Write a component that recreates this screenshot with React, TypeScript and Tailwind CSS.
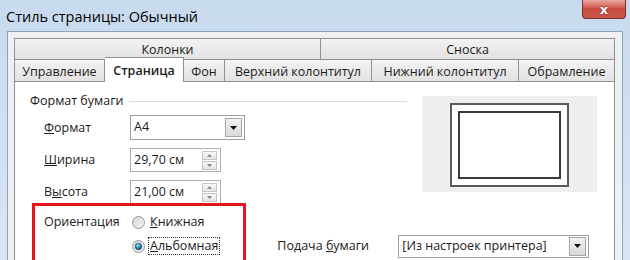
import React from "react";

const tabsTop = [
  { label: "Колонки", w: "w-[307px]" },
  { label: "Сноска", w: "w-[294px]" },
];

const tabsBottom = [
  { label: "Управление", w: "w-[91px]" },
  { label: "Страница", w: "w-[79px]", active: true },
  { label: "Фон", w: "w-[41px]" },
  { label: "Верхний колонтитул", w: "w-[147px]" },
  { label: "Нижний колонтитул", w: "w-[147px]" },
  { label: "Обрамление", w: "w-[96px]" },
];

function DropButton() {
  return (
    <div className="w-[17px] h-[19px] mr-[2px] border border-[#a7a7a7] bg-gradient-to-b from-[#f2f2f2] to-[#d9d9d9] flex items-center justify-center">
      <svg width="7" height="4" viewBox="0 0 7 4">
        <path d="M0 0h7L3.5 4z" fill="#111" />
      </svg>
    </div>
  );
}

function Spinner() {
  return (
    <div className="flex flex-col gap-[1px] mr-[3px]">
      {[0, 1].map((i) => (
        <div
          key={i}
          className="w-[15px] h-[9px] border border-[#c4c4c4] bg-gradient-to-b from-[#f8f8f8] to-[#e4e4e4] flex items-center justify-center"
        >
          <svg width="5" height="3" viewBox="0 0 5 3">
            <path d={i === 0 ? "M0 3h5L2.5 0z" : "M0 0h5L2.5 3z"} fill="#8a8a8a" />
          </svg>
        </div>
      ))}
    </div>
  );
}

function Radio({ checked }: { checked?: boolean }) {
  return (
    <svg width="13" height="13" viewBox="0 0 13 13">
      <defs>
        <linearGradient id={checked ? "rb1" : "rb0"} x1="0" y1="0" x2="1" y2="1">
          <stop offset="0" stopColor="#d4d4d4" />
          <stop offset="1" stopColor="#f6f6f6" />
        </linearGradient>
        <radialGradient id="dot" cx="0.4" cy="0.35" r="0.7">
          <stop offset="0" stopColor="#a8e0f5" />
          <stop offset="0.5" stopColor="#2a8bbf" />
          <stop offset="1" stopColor="#0d3d5c" />
        </radialGradient>
      </defs>
      <circle cx="6.5" cy="6.5" r="6" fill={checked ? "url(#rb1)" : "url(#rb0)"} stroke="#9a9a9a" />
      {checked && <circle cx="6.5" cy="6.5" r="3.3" fill="url(#dot)" stroke="#1b4a6a" strokeWidth="0.6" />}
    </svg>
  );
}

export default function App() {
  return (
    <div className="w-[630px] h-[260px] overflow-hidden bg-gradient-to-b from-[#c8daee] to-[#d8e5f4] text-[#1b1b1b] font-['Open_Sans','Noto_Sans',sans-serif] text-[12.5px] leading-none">
      <div className="h-[31px] flex justify-between items-start">
        <div className="pl-[6px] pt-[10px] text-[14.5px] text-black">Стиль страницы: Обычный</div>
        <div className="mr-[4px] w-[44px] h-[19px] rounded-b-[4px] border border-t-0 border-[#7d2d2a] bg-gradient-to-b from-[#e8a79f] via-[#cc4b3f] to-[#c8574c] flex items-center justify-center">
          <span className="text-white font-bold text-[13px] font-['DejaVu_Sans',sans-serif] [text-shadow:0_0_2px_#5a1a16]">x</span>
        </div>
      </div>

      <div className="ml-[7px] w-[616px] h-[240px] border border-[#8fa3bb] bg-[#f0f0f0] pl-[6px] pr-[7px] pt-[6px]">
        <div className="flex h-[21px]">
          {tabsTop.map((t, i) => (
            <div
              key={t.label}
              className={`${t.w} border-t border-r border-[#8d9199] ${i === 0 ? "border-l" : ""} bg-gradient-to-b from-[#f3f3f3] to-[#e2e2e2] flex items-center justify-center pt-[3px]`}
            >
              {t.label}
            </div>
          ))}
        </div>
        <div className="flex items-end h-[22px]">
          {tabsBottom.map((t, i) =>
            t.active ? (
              <div
                key={t.label}
                className={`${t.w} h-[25px] -mb-[1px] relative z-10 bg-white border-t border-r border-[#8d9199] flex items-center justify-center font-semibold pt-[3px]`}
              >
                {t.label}
              </div>
            ) : (
              <div
                key={t.label}
                className={`${t.w} h-[22px] border-t border-r border-[#8d9199] ${i === 0 ? "border-l" : ""} bg-gradient-to-b from-[#f3f3f3] to-[#e2e2e2] flex items-center justify-center pt-[4px]`}
              >
                {t.label}
              </div>
            )
          )}
        </div>

        <div className="relative h-[200px] border border-[#8d9199] bg-white">
          <div className="flex items-start">
            <div className="pl-[15px] pt-[11px]">
              <div className="w-[377px] h-[16px] flex items-center pt-[1px]">
                <span>Формат бумаги</span>
                <div className="flex-1 h-px bg-[#d5dde4] ml-[5px]" />
              </div>

              <div className="mt-[6px] flex items-center h-[25px] pl-[14px]">
                <div className="w-[86px] pt-[1px]">
                  <u>Ф</u>ормат
                </div>
                <div className="w-[115px] h-[25px] border border-[#9f9f9f] bg-white flex items-center justify-between">
                  <span className="pl-[3px]">A4</span>
                  <DropButton />
                </div>
              </div>

              <div className="mt-[8px] flex items-center h-[24px] pl-[14px]">
                <div className="w-[86px]">
                  <u>Ш</u>ирина
                </div>
                <div className="w-[91px] h-[24px] border border-[#abadb3] bg-white flex items-center justify-between">
                  <span className="pl-[3px]">29,70 см</span>
                  <Spinner />
                </div>
              </div>

              <div className="mt-[8px] flex items-center h-[24px] pl-[14px]">
                <div className="w-[86px]">
                  В<u>ы</u>сота
                </div>
                <div className="w-[91px] h-[24px] border border-[#abadb3] bg-white flex items-center justify-between">
                  <span className="pl-[3px]">21,00 см</span>
                  <Spinner />
                </div>
              </div>
            </div>

            <div className="ml-[15px] mt-[14px] w-[175px] h-[96px] bg-[#efefef] pl-[28px] pt-[7px]">
              <div className="w-[119px] h-[84px] border-2 border-[#5b5b5b] bg-white p-[6px] flex">
                <div className="flex-1 border-2 border-[#3a3a3a]" />
              </div>
            </div>
          </div>

          <div className="pl-[29px] mt-[9px]">
            <div className="flex items-center h-[18px]">
              <div className="w-[88px] pt-[1px]">Ориентация</div>
              <Radio />
              <span className="ml-[4px] px-[1px] pt-[1px]">
                <u>К</u>нижная
              </span>
            </div>
            <div className="mt-[6px] flex items-center h-[18px]">
              <div className="w-[88px]" />
              <Radio checked />
              <span className="ml-[3px] px-[1px] py-[2px] border border-dotted border-[#333]">
                <u>А</u>льбомная
              </span>
              <div className="ml-[57px] w-[121px] pt-[1px]">
                Подача <u>б</u>умаги
              </div>
              <div className="w-[191px] h-[23px] border border-[#9f9f9f] bg-white flex items-center justify-between">
                <span className="pl-[3px]">[Из настроек принтера]</span>
                <DropButton />
              </div>
            </div>
          </div>

          <div className="absolute left-[17px] top-[121px] w-[214px] h-[90px] border-[3px] border-[#e5141c]" />
        </div>
      </div>
    </div>
  );
}
